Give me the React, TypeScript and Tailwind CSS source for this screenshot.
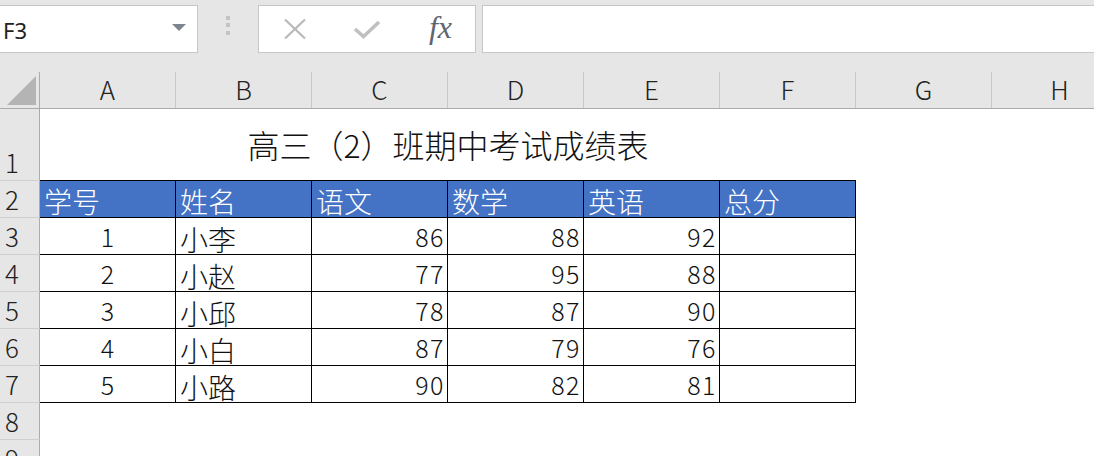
import React from "react";

const CJK = { fontFamily: '"Noto Sans CJK SC", "Noto Sans", sans-serif' };

type Row = { n: number; kind: "title" | "header" | "data" | "empty"; vals?: (string | number)[] };

const data: (string | number)[][] = [
  [1, "小李", 86, 88, 92],
  [2, "小赵", 77, 95, 88],
  [3, "小邱", 78, 87, 90],
  [4, "小白", 87, 79, 76],
  [5, "小路", 90, 82, 81],
];

const headers = ["学号", "姓名", "语文", "数学", "英语", "总分"];
const letters = ["A", "B", "C", "D", "E", "F", "G", "H"];

function RowHead({ n }: { n: number }) {
  return (
    <div className="w-[40px] shrink-0 h-full box-border bg-[#e6e6e6] border-r border-b border-r-[#ababab] border-b-[#cfcfcf] flex items-end pl-[5px] pb-[5px] text-[26px] leading-none text-[#222] font-light">
      {n}
    </div>
  );
}

function Toolbar() {
  return (
    <div className="h-[72px] bg-[#e6e6e6] flex items-start pt-[5px]">
      <div className="w-[198px] h-[48px] shrink-0 box-border bg-white border border-l-0 border-[#c6c6c6] flex items-center justify-between pl-[3px] pr-[11px]">
        <span className="text-[22px] text-[#222] leading-none mt-[2px]" style={{ fontFamily: '"Noto Sans", sans-serif' }}>F3</span>
        <svg width="14" height="7" viewBox="0 0 14 7" className="mt-[-4px]">
          <polygon points="0,0 14,0 7,7" fill="#7d8590" />
        </svg>
      </div>
      <div className="w-[60px] h-[48px] shrink-0 flex flex-col items-center justify-center gap-[3.5px] pr-[1px] mt-[-4px]">
        <div className="w-[4px] h-[4px] bg-[#c4c4c4]" />
        <div className="w-[4px] h-[4px] bg-[#c4c4c4]" />
        <div className="w-[4px] h-[4px] bg-[#c4c4c4]" />
      </div>
      <div className="w-[218px] h-[48px] shrink-0 box-border bg-white border border-[#c6c6c6] flex items-center">
        <div className="w-[72px] flex justify-center">
          <svg width="24" height="22" viewBox="0 0 24 22">
            <line x1="2" y1="1.5" x2="22" y2="20.5" stroke="#b8b8b8" strokeWidth="2.2" />
            <line x1="22" y1="1.5" x2="2" y2="20.5" stroke="#b8b8b8" strokeWidth="2.2" />
          </svg>
        </div>
        <div className="w-[72px] flex justify-center">
          <svg width="28" height="19" viewBox="0 0 28 19">
            <polyline points="2,9 10.5,16.5 26,2" fill="none" stroke="#c0c0c0" strokeWidth="3.6" />
          </svg>
        </div>
        <div className="w-[72px] flex justify-center pl-[3px]">
          <span
            className="italic text-[32px] leading-none text-[#5e6570] mt-[-4px]"
            style={{ fontFamily: '"Liberation Serif", "DejaVu Serif", serif' }}
          >
            fx
          </span>
        </div>
      </div>
      <div className="ml-[6px] flex-1 h-[48px] box-border bg-white border border-r-0 border-[#c6c6c6]" />
    </div>
  );
}

function ColHeader() {
  return (
    <div className="h-[37px] flex bg-[#e6e6e6] box-border border-b border-[#ababab]">
      <div className="w-[40px] shrink-0 h-full box-border border-r border-[#ababab] relative flex items-end justify-end pr-[4px] pb-[3px]">
        <svg width="29" height="29" viewBox="0 0 29 29" className="mr-[-1px]">
          <polygon points="29,0 29,29 0,29" fill="#b4b4b4" />
        </svg>
      </div>
      {letters.map((l) => (
        <div
          key={l}
          className="w-[136px] shrink-0 h-full box-border border-r border-[#c8c8c8] flex items-end justify-center pb-[6px] text-[26px] leading-none text-[#222] font-light"
          style={CJK}
        >
          {l}
        </div>
      ))}
    </div>
  );
}

export default function App() {
  const rows: Row[] = [
    { n: 1, kind: "title" },
    { n: 2, kind: "header" },
    ...data.map((d, i) => ({ n: i + 3, kind: "data" as const, vals: d })),
    { n: 8, kind: "empty" },
    { n: 9, kind: "empty" },
  ];

  return (
    <div className="w-[1094px] h-[456px] overflow-hidden bg-white" style={CJK}>
      <Toolbar />
      <ColHeader />
      {rows.map((r) => {
        if (r.kind === "title") {
          return (
            <div key={r.n} className="h-[72px] flex">
              <RowHead n={r.n} />
              <div className="w-[816px] shrink-0 h-full box-border border-b border-black flex items-center justify-center text-[32px] leading-none text-[#111] pb-[1px] font-light">
                高三（2）班期中考试成绩表
              </div>
              <div className="w-[136px] shrink-0" />
              <div className="w-[136px] shrink-0" />
            </div>
          );
        }
        if (r.kind === "header") {
          return (
            <div key={r.n} className="h-[37px] flex">
              <RowHead n={r.n} />
              {headers.map((h) => (
                <div
                  key={h}
                  className="w-[136px] shrink-0 h-full box-border bg-[#4472c4] border-r border-b border-black flex items-end pl-[4px] pb-[2px] text-[28px] leading-none text-white font-light"
                >
                  {h}
                </div>
              ))}
              <div className="w-[136px] shrink-0" />
              <div className="w-[136px] shrink-0" />
            </div>
          );
        }
        if (r.kind === "data" && r.vals) {
          const v = r.vals;
          return (
            <div key={r.n} className="h-[37px] flex">
              <RowHead n={r.n} />
              <div className="w-[136px] shrink-0 h-full box-border border-r border-b border-black flex items-end justify-center pb-[5px] text-[25px] leading-none text-[#111] font-light">
                {v[0]}
              </div>
              <div className="w-[136px] shrink-0 h-full box-border border-r border-b border-black flex items-end pl-[4px] pb-[1px] text-[28px] leading-none text-[#111] font-light">
                {v[1]}
              </div>
              {[v[2], v[3], v[4]].map((x, i) => (
                <div
                  key={i}
                  className="w-[136px] shrink-0 h-full box-border border-r border-b border-black flex items-end justify-end pr-[2px] pb-[5px] text-[25px] leading-none text-[#111] font-light tracking-[1.5px]"
                >
                  {x}
                </div>
              ))}
              <div className="w-[136px] shrink-0 h-full box-border border-r border-b border-black" />
              <div className="w-[136px] shrink-0" />
              <div className="w-[136px] shrink-0" />
            </div>
          );
        }
        return (
          <div key={r.n} className="h-[37px] flex">
            <RowHead n={r.n} />
            <div className="flex-1" />
          </div>
        );
      })}
    </div>
  );
}
